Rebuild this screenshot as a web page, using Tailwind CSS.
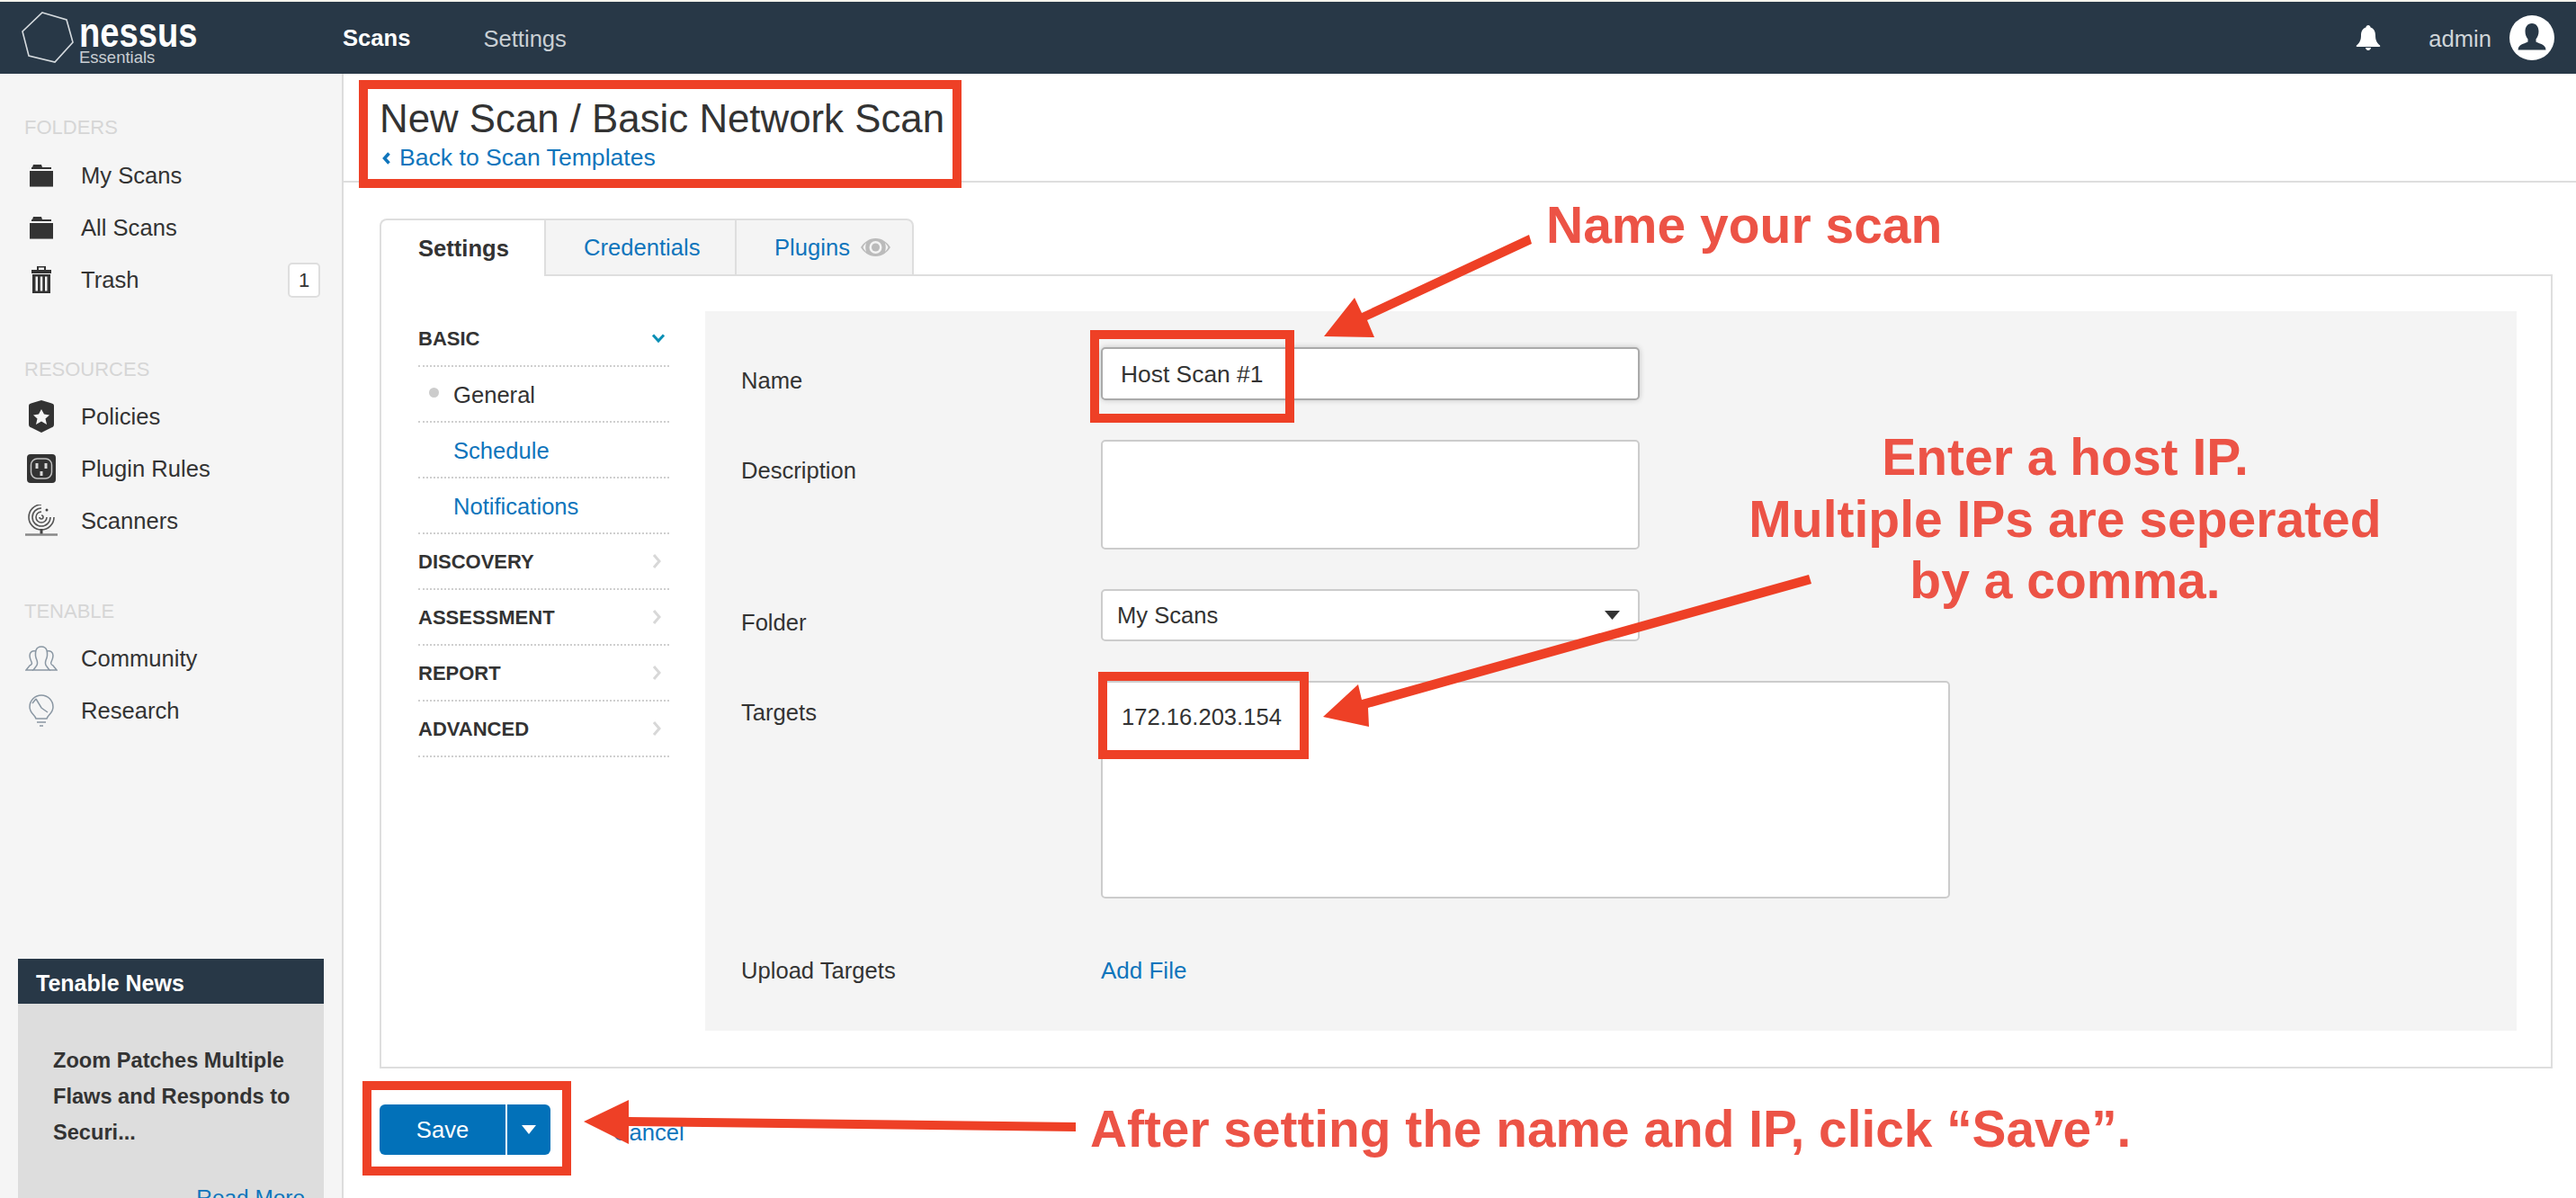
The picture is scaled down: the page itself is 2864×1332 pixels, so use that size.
<!DOCTYPE html>
<html>
<head>
<meta charset="utf-8">
<title>Nessus - New Scan</title>
<script src="https://cdn.jsdelivr.net/npm/@tailwindcss/browser@4"></script>
</head>
<body class="font-['Liberation_Sans',sans-serif] text-[#333] bg-white">
<div class="relative w-[2864px] h-[1332px] overflow-hidden flex flex-col">

    <!-- top bar -->
    <div class="h-[2px] bg-[#f4f3ec]"></div>
    <header class="h-[80px] bg-[#283847] flex items-center shrink-0">
        <div class="w-[381px] flex items-center pl-[23px]">
            <svg class="w-[60px] h-[60px] -mt-[2px]" viewBox="0 0 60 60" fill="none" stroke="#d5dade" stroke-width="1.6">
                <path d="M24 3 L51 11 L58 36 L38 58 L9 51 L2 24 Z"/>
            </svg>
            <div class="ml-[5px] flex flex-col pt-[6px]">
                <span class="text-white font-bold text-[46px] leading-[40px] scale-x-[0.83] origin-left">nessus</span>
                <span class="text-[#c8ced3] text-[18.5px] leading-[22px] -mt-[3px]">Essentials</span>
            </div>
        </div>
        <nav class="flex items-center">
            <a class="text-white font-bold text-[25.6px]">Scans</a>
            <a class="ml-[81px] text-[#c9cfd4] text-[25.6px] mt-[2px]">Settings</a>
        </nav>
        <div class="ml-auto flex items-center pr-[24px]">
            <svg class="w-[28px] h-[28px]" viewBox="0 0 28 28" fill="#fff">
                <path d="M14 0c1.4 0 2.4 1 2.6 2.4C20.4 3.5 22 7 22 11c0 5 1 8 5 11.5.6.6.3 1.500-.6 1.500H1.600c-.9 0-1.200-.9-.6-1.500C5 19 6 16 6 11c0-4 1.600-7.500 5.400-8.600C11.600 1 12.600 0 14 0z"/>
                <path d="M11 25h6c0 1.500-1.300 3-3 3s-3-1.500-3-3z"/>
            </svg>
            <span class="ml-[53px] text-[#d0d5d9] text-[25.6px] mt-[2px]">admin</span>
            <div class="ml-[20px] w-[50px] h-[50px] rounded-full bg-white overflow-hidden flex items-center justify-center">
                <svg class="w-[34px] h-[34px]" viewBox="0 0 34 34" fill="#283847">
                    <path d="M17 1c5 0 7.500 4 7.500 9 0 3.500-1.300 6.500-3 8.500v3c2 1.500 9 2.500 10.500 6.500l.5 2.500H1.500L2 28c1.500-4 8.500-5 10.500-6.500v-3c-1.700-2-3-5-3-8.500C9.500 5 12 1 17 1z"/>
                </svg>
            </div>
        </div>
    </header>

    <div class="flex flex-1 min-h-0">
        <!-- sidebar -->
        <aside class="w-[382px] shrink-0 bg-[#f5f5f5] border-r-2 border-[#dcdcdc] flex flex-col pt-[45px]">
            <div class="pl-[27px] h-[30px] leading-[30px] text-[22px] text-[#d6d6d6]">FOLDERS</div>
            <ul class="mt-[9px]">
                <li class="h-[58px] flex items-center text-[25.6px]">
                    <span class="w-[90px] pl-[2px] flex justify-center">
                        <svg class="w-[26px] h-[25px]" viewBox="0 0 26 25" fill="#333"><path d="M3 3L4 0H13L14 3H24V5H2V3Z"/><path d="M0 7H26V25H0Z"/><path d="M0 24H26V25H0Z" fill="#888"/></svg>
                    </span>My Scans
                </li>
                <li class="h-[58px] flex items-center text-[25.6px]">
                    <span class="w-[90px] pl-[2px] flex justify-center">
                        <svg class="w-[26px] h-[25px]" viewBox="0 0 26 25" fill="#333"><path d="M3 3L4 0H13L14 3H24V5H2V3Z"/><path d="M0 7H26V25H0Z"/><path d="M0 24H26V25H0Z" fill="#888"/></svg>
                    </span>All Scans
                </li>
                <li class="h-[58px] flex items-center text-[25.6px]">
                    <span class="w-[90px] pl-[2px] flex justify-center">
                        <svg class="w-[22px] h-[30px]" viewBox="0 0 22 30" fill="#333"><path fill-rule="evenodd" d="M6 0h10v4h6v4H0V4h6zM8 1.500V4h6V1.500zM1 9h20v21H1zM4.500 11.500v16h2.500v-16zM9.800 11.500v16h2.500v-16zM15 11.500v16h2.500v-16z"/></svg>
                    </span>Trash
                    <span class="ml-auto mr-[24px] w-[36px] h-[39px] bg-white border-2 border-[#dedede] rounded-[5px] flex items-center justify-center text-[22px]">1</span>
                </li>
            </ul>
            <div class="mt-[56px] pl-[27px] h-[30px] leading-[30px] text-[22px] text-[#d6d6d6]">RESOURCES</div>
            <ul class="mt-[8px]">
                <li class="h-[58px] flex items-center text-[25.6px]">
                    <span class="w-[90px] pl-[2px] flex justify-center">
                        <svg class="w-[28px] h-[36px]" viewBox="0 0 28 36" fill="#333"><path fill-rule="evenodd" d="M14 0 L24 3 C26 3.500 28 4 28 6 V27 C28 29 27 30 25 30.500 L14 36 L3 30.500 C1 30 0 29 0 27 V6 C0 4 2 3.500 4 3 Z M14 10 L17 15.500 L23 16.500 L18.500 20.500 L20 27 L14 23.500 L8 27 L9.500 20.500 L5 16.500 L11 15.500 Z"/></svg>
                    </span>Policies
                </li>
                <li class="h-[58px] flex items-center text-[25.6px]">
                    <span class="w-[90px] pl-[2px] flex justify-center">
                        <svg class="w-[32px] h-[32px]" viewBox="0 0 32 32"><rect width="32" height="32" rx="4" fill="#333"/><rect x="4.500" y="5" width="23" height="22" rx="7" fill="none" stroke="#c4c4c4" stroke-width="1.500"/><rect x="9.500" y="10" width="3" height="6" fill="#d8d8d8"/><rect x="19.500" y="10" width="3" height="6" fill="#d8d8d8"/><rect x="14.500" y="19" width="3" height="5" fill="#d8d8d8"/></svg>
                    </span>Plugin Rules
                </li>
                <li class="h-[58px] flex items-center text-[25.6px]">
                    <span class="w-[90px] pl-[2px] flex justify-center">
                        <svg class="w-[36px] h-[36px]" viewBox="0 0 36 36" fill="none" stroke="#555" stroke-width="1.600"><path d="M18 0A14 14 0 1 0 32 14"/><path d="M18 4A10 10 0 1 0 28 14"/><path d="M18 8A6 6 0 1 0 24 14"/><path d="M16 14A2 2 0 1 0 18 12"/><circle cx="24" cy="6" r="1.500" fill="#444" stroke="none"/><path d="M18 27V34" stroke-width="3" stroke="#444"/><path d="M0 33.500H36" stroke="#888" stroke-width="2.500"/></svg>
                    </span>Scanners
                </li>
            </ul>
            <div class="mt-[57px] pl-[27px] h-[30px] leading-[30px] text-[22px] text-[#d6d6d6]">TENABLE</div>
            <ul class="mt-[8px]">
                <li class="h-[58px] flex items-center text-[25.6px]">
                    <span class="w-[90px] pl-[2px] flex justify-center">
                        <svg class="w-[36px] h-[28px]" viewBox="0 0 36 28" fill="none" stroke="#8a97a3" stroke-width="1.500"><path d="M9 27L12 23C14 21 14 19 13 16C11 12 11 9 12 5C13 2 15 1 18 1C21 1 23 2 24 5C25 9 25 12 23 16C22 19 22 21 24 23L27 27Z"/><path d="M12 6C8 5 5 7 5 11C5 14 6 16 7 18C8 20 7 21 5 22L1 27H9"/><path d="M24 6C28 5 31 7 31 11C31 14 30 16 29 18C28 20 29 21 31 22L35 27H27"/></svg>
                    </span>Community
                </li>
                <li class="h-[58px] flex items-center text-[25.6px]">
                    <span class="w-[90px] pl-[2px] flex justify-center">
                        <svg class="w-[28px] h-[36px]" viewBox="0 0 28 36" fill="none" stroke="#8a97a3" stroke-width="1.500"><path d="M8 27C7 23 1 21 1 14A13 13 0 0 1 27 14C27 21 21 23 20 27Z"/><path d="M9 31H19M12 35H16"/><path d="M8 5L14 15L21 20M8 5L4 10"/></svg>
                    </span>Research
                </li>
            </ul>
            <div class="mt-auto mx-[20px] w-[340px] h-[266px] bg-[#dddddd] shrink-0">
                <div class="h-[50px] bg-[#283847] text-white font-bold text-[25px] leading-[54px] pl-[20px]">Tenable News</div>
                <div class="pt-[43px] pl-[39px] pr-[20px] font-bold text-[23.6px] leading-[40px]">Zoom Patches Multiple Flaws and Responds to Securi...</div>
                <div class="mt-[36px] pr-[21px] text-right text-[#0f75bc] text-[24.4px] leading-[34px]">Read More</div>
            </div>
        </aside>

        <!-- main -->
        <main class="flex-1 min-w-0 flex flex-col">
            <div class="h-[121px] border-b-2 border-[#dedede] pl-[40px] pt-[25px] shrink-0">
                <h1 class="text-[43.8px] leading-[50px]">New Scan / Basic Network Scan</h1>
                <a class="flex items-center h-[34px] mt-[2px] text-[#0f75bc] text-[26.6px]">
                    <svg class="w-[9px] h-[14px] ml-[3px] mr-[10px]" viewBox="0 0 9 14" fill="none" stroke="#0f75bc" stroke-width="3.5"><path d="M7.500 1.500L2.500 7L7.500 12.500"/></svg>Back to Scan Templates
                </a>
            </div>

            <div class="pl-[40px] pr-[26px] pt-[40px] flex-1">
                <div class="flex h-[64px] text-[25.6px]">
                    <div class="w-[185px] border-2 border-b-0 border-[#dedede] rounded-tl-[8px] bg-white font-bold flex items-center pl-[41px]">Settings</div>
                    <div class="w-[212px] border-t-2 border-r-2 border-b-2 border-[#dedede] bg-[#f4f4f4] text-[#0f75bc] flex items-center pl-[42px]">Credentials</div>
                    <div class="w-[197px] border-t-2 border-r-2 border-b-2 border-[#dedede] rounded-tr-[8px] bg-[#f4f4f4] text-[#0f75bc] flex items-center pl-[42px]">Plugins
                        <svg class="w-[33px] h-[20px] ml-[12px]" viewBox="0 0 33 20"><path fill="#bbb" fill-rule="evenodd" d="M16.500 0C24 0 30 5 33 10 30 15 24 20 16.500 20 9 20 3 15 0 10 3 5 9 0 16.500 0zM16.500 3a7 7 0 1 0 0 14 7 7 0 0 0 0-14zM6 5C4.500 6.500 3.500 8 2.500 10 3.500 12 4.500 13.500 6 15 5 12 5 8 6 5zM27 5c1 3 1 7 0 10 1.500-1.500 2.500-3 3.500-5-1-2-2-3.500-3.500-5z"/><circle cx="16.500" cy="10" r="4.500" fill="#bbb"/></svg>
                    </div>
                    <div class="flex-1 border-b-2 border-[#dedede]"></div>
                </div>

                <div class="h-[881px] border-2 border-t-0 border-[#dedede] flex pl-[41px] pr-[38px] pt-[39px]">
                    <!-- section nav -->
                    <ul class="w-[279px] shrink-0 text-[25.6px]">
                        <li class="h-[62px] border-b-2 border-dotted border-[#cfcfcf] flex items-center justify-between pr-[4px] font-bold text-[22px]">BASIC
                            <svg class="w-[16px] h-[12px]" viewBox="0 0 16 12" fill="none" stroke="#0a8fb5" stroke-width="3"><path d="M2 2.500L8 9L14 2.500"/></svg>
                        </li>
                        <li class="h-[62px] border-b-2 border-dotted border-[#cfcfcf] flex items-center relative pl-[39px] pt-[2px]">
                            <span class="absolute left-[12px] top-[23px] w-[11px] h-[11px] rounded-full bg-[#cccccc]"></span>General
                        </li>
                        <li class="h-[62px] border-b-2 border-dotted border-[#cfcfcf] flex items-center pl-[39px] pt-[2px] text-[#0f75bc]">Schedule</li>
                        <li class="h-[62px] border-b-2 border-dotted border-[#cfcfcf] flex items-center pl-[39px] pt-[2px] text-[#0f75bc]">Notifications</li>
                        <li class="h-[62px] border-b-2 border-dotted border-[#cfcfcf] flex items-center justify-between pr-[9px] font-bold text-[22px]">DISCOVERY
                            <svg class="w-[10px] h-[20px]" viewBox="0 0 10 20" fill="none" stroke="#d8d8d8" stroke-width="3"><path d="M2 3L8 10L2 17"/></svg>
                        </li>
                        <li class="h-[62px] border-b-2 border-dotted border-[#cfcfcf] flex items-center justify-between pr-[9px] font-bold text-[22px]">ASSESSMENT
                            <svg class="w-[10px] h-[20px]" viewBox="0 0 10 20" fill="none" stroke="#d8d8d8" stroke-width="3"><path d="M2 3L8 10L2 17"/></svg>
                        </li>
                        <li class="h-[62px] border-b-2 border-dotted border-[#cfcfcf] flex items-center justify-between pr-[9px] font-bold text-[22px]">REPORT
                            <svg class="w-[10px] h-[20px]" viewBox="0 0 10 20" fill="none" stroke="#d8d8d8" stroke-width="3"><path d="M2 3L8 10L2 17"/></svg>
                        </li>
                        <li class="h-[62px] border-b-2 border-dotted border-[#cfcfcf] flex items-center justify-between pr-[9px] font-bold text-[22px]">ADVANCED
                            <svg class="w-[10px] h-[20px]" viewBox="0 0 10 20" fill="none" stroke="#d8d8d8" stroke-width="3"><path d="M2 3L8 10L2 17"/></svg>
                        </li>
                    </ul>

                    <!-- form -->
                    <form class="ml-[40px] flex-1 h-[800px] bg-[#f4f4f4] pl-[40px] pt-[40px] text-[25.6px]">
                        <div class="flex">
                            <label class="w-[400px] h-[34px] leading-[34px] mt-[20px]">Name</label>
                            <input type="text" value="Host Scan #1" class="w-[599px] h-[59px] bg-white border-2 border-[#aaaaaa] rounded-[5px] shadow-[0_0_6px_rgba(0,0,0,0.2)] pl-[20px] pt-[2px] outline-none text-[26.4px]">
                        </div>
                        <div class="flex mt-[44px]">
                            <label class="w-[400px] h-[34px] leading-[34px] mt-[17px]">Description</label>
                            <textarea class="w-[599px] h-[122px] bg-white border-2 border-[#cccccc] rounded-[5px] resize-none outline-none"></textarea>
                        </div>
                        <div class="flex mt-[44px]">
                            <label class="w-[400px] h-[34px] leading-[34px] mt-[20px]">Folder</label>
                            <div class="w-[599px] h-[58px] bg-white border-2 border-[#cccccc] rounded-[5px] flex items-center justify-between pl-[16px] pr-[20px]">My Scans
                                <svg class="w-[17px] h-[10px]" viewBox="0 0 17 10" fill="#333"><path d="M0 0H17L8.500 10Z"/></svg>
                            </div>
                        </div>
                        <div class="flex mt-[44px]">
                            <label class="w-[400px] h-[34px] leading-[34px] mt-[18px]">Targets</label>
                            <textarea class="w-[944px] h-[242px] bg-white border-2 border-[#cccccc] rounded-[5px] resize-none outline-none pl-[21px] pt-[21px] leading-[34px]">172.16.203.154</textarea>
                        </div>
                        <div class="flex mt-[63px]">
                            <label class="w-[400px] h-[34px] leading-[34px]">Upload Targets</label>
                            <a class="h-[34px] leading-[34px] text-[#0f75bc] text-[26px]">Add File</a>
                        </div>
                    </form>
                </div>

                <div class="mt-[40px] flex items-center">
                    <button class="w-[140px] h-[56px] bg-[#0271b9] text-white text-[25.6px] rounded-l-[6px]">Save</button>
                    <button class="ml-[2px] w-[48px] h-[56px] bg-[#0271b9] rounded-r-[6px] flex items-center justify-center">
                        <svg class="w-[16px] h-[10px]" viewBox="0 0 16 10" fill="#fff"><path d="M0 0H16L8 10Z"/></svg>
                    </button>
                    <a class="ml-[69px] text-[#0f75bc] text-[25.6px] mt-[6px]">Cancel</a>
                </div>
            </div>
        </main>
    </div>

    <!-- annotations on top of the screenshot -->
    <div class="absolute left-[399px] top-[89px] w-[670px] h-[120px] border-[10px] border-[#ee4026]"></div>
    <div class="absolute left-[1212px] top-[367px] w-[227px] h-[103px] border-[10px] border-[#ee4026]"></div>
    <div class="absolute left-[1221px] top-[747px] w-[234px] h-[97px] border-[10px] border-[#ee4026]"></div>
    <div class="absolute left-[403px] top-[1202px] w-[232px] h-[105px] border-[10px] border-[#ee4026]"></div>

    <svg class="absolute left-0 top-0 w-[2864px] h-[1332px]" viewBox="0 0 2864 1332" fill="#ee4026">
        <path d="M1700 261L1703 271L1520 356L1528 375L1472 374L1506 331L1514 348Z"/>
        <path d="M2011 639L2014 649L1521 787L1522 808L1471 797L1510 761L1514 778Z"/>
        <path d="M1196 1248L1196 1258L699 1252L699 1272L649 1247L699 1223L699 1242Z"/>
    </svg>

    <div class="absolute left-[1719px] top-[216px] text-[57px] leading-[68px] font-bold text-[#ec5346]">Name your scan</div>
    <div class="absolute left-[1896px] top-[474px] w-[800px] text-center text-[57px] leading-[68.5px] font-bold text-[#ec5346]">Enter a host IP.<br>Multiple IPs are seperated<br>by a comma.</div>
    <div class="absolute left-[1212px] top-[1222px] text-[56.8px] leading-[68px] font-bold text-[#ec5346] whitespace-nowrap">After setting the name and IP, click “Save”.</div>
</div>
</body>
</html>
